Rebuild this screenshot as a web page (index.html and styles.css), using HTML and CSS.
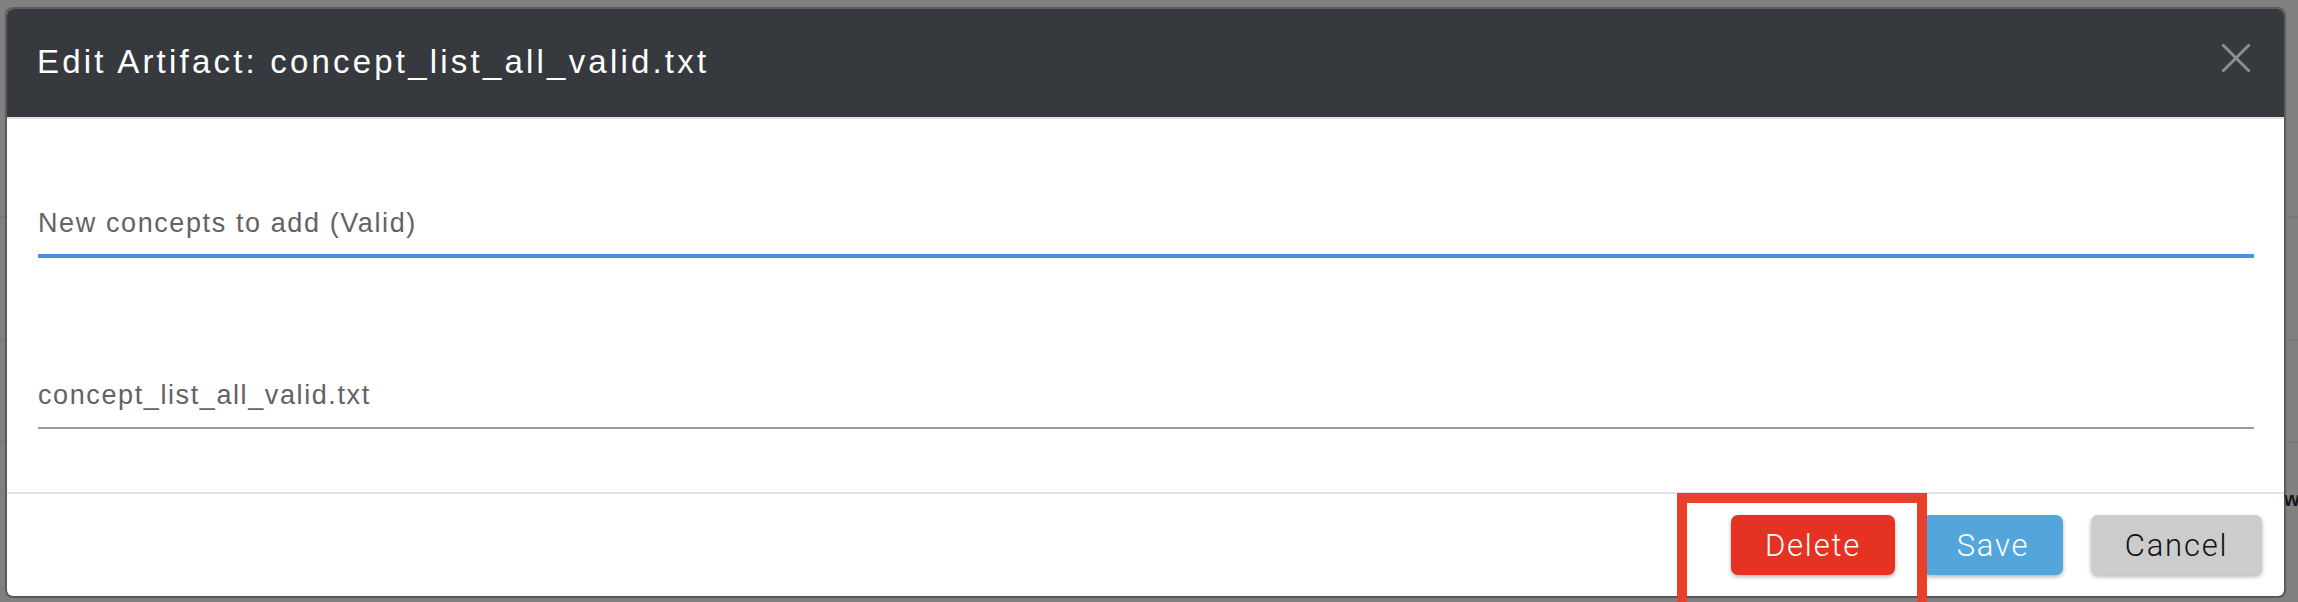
FILE: index.html
```html
<!DOCTYPE html>
<html lang="en">
<head>
<meta charset="utf-8">
<title>Edit Artifact</title>
<link rel="stylesheet" href="styles.css">
</head>
<body>
  <div class="page">
    <div class="row row-a"></div>
    <div class="row row-b"></div>
    <div class="row row-c"></div>
    <div class="row row-d"><span class="peek">w</span></div>
  </div>

  <div class="modal">
    <div class="modal-header">
      <h1 class="modal-title">Edit Artifact: concept_list_all_valid.txt</h1>
      <button class="close-btn" aria-label="Close">
        <svg width="30" height="30" viewBox="0 0 30 30">
          <path d="M1.5 1.5 L28.5 28.5 M28.5 1.5 L1.5 28.5" stroke="#8d8e90" stroke-width="3" fill="none"/>
        </svg>
      </button>
    </div>
    <div class="modal-body">
      <div class="field field-focused">
        <div class="field-input">New concepts to add (Valid)</div>
      </div>
      <div class="field field-file">
        <div class="field-input">concept_list_all_valid.txt</div>
      </div>
    </div>
    <div class="modal-footer">
      <button class="btn btn-delete">Delete</button>
      <button class="btn btn-save">Save</button>
      <button class="btn btn-cancel">Cancel</button>
    </div>
  </div>

  <div class="highlight-box"></div>
</body>
</html>
```

FILE: styles.css
```css
html, body {
  margin: 0;
  padding: 0;
  overflow: hidden;
}

body {
  background: #808080;
  width: 2298px;
  height: 602px;
  position: relative;
  font-family: "Liberation Sans", Arial, sans-serif;
}

/* backdrop page (under the dimming overlay) */
.page {
  display: flex;
  flex-direction: column;
}

.row {
  border-bottom: 2px solid #797979;
}

.row-a { height: 216px; }
.row-b { height: 121px; }
.row-c { height: 100px; }
.row-d {
  border-bottom: none;
  padding-top: 46px;
  padding-left: 2284px;
  white-space: nowrap;
}

.peek {
  font-size: 20px;
  font-weight: bold;
  color: #141414;
  line-height: 20px;
}

/* dialog */
.modal {
  position: absolute;
  left: 7px;
  top: 9px;
  width: 2277px;
  height: 587px;
  background: #ffffff;
  border-radius: 6px;
  box-shadow: 0 0 0 2px rgba(70, 70, 70, 0.55), 0 1px 3px rgba(0, 0, 0, 0.3);
  display: flex;
  flex-direction: column;
  overflow: hidden;
}

.modal-header {
  height: 108px;
  background: #363a3e;
  border-bottom: 2px solid #dfe3e8;
  display: flex;
  align-items: center;
  justify-content: space-between;
  padding: 0 33px 0 30px;
  flex-shrink: 0;
}

.modal-title {
  margin: 0 0 2px 0;
  color: #ffffff;
  font-size: 33px;
  font-weight: normal;
  letter-spacing: 3.2px;
  line-height: 40px;
}

.close-btn {
  background: none;
  border: none;
  padding: 0;
  width: 30px;
  height: 30px;
  margin-bottom: 10px;
  display: flex;
}

.modal-body {
  flex: 1;
  padding: 88px 30px 0 31px;
  display: flex;
  flex-direction: column;
}

.field-input {
  font-size: 27px;
  line-height: 32px;
  letter-spacing: 1.6px;
  color: #636363;
}

.field-focused .field-input {
  padding-bottom: 15px;
  border-bottom: 4px solid #4a90e2;
}

.field-file {
  margin-top: 121px;
}

.field-file .field-input {
  padding-bottom: 16px;
  border-bottom: 2px solid #999999;
}

.modal-footer {
  border-top: 2px solid #e1e4e8;
  padding: 21px 22px 21px 0;
  display: flex;
  justify-content: flex-end;
  gap: 28px;
  flex-shrink: 0;
}

.btn {
  height: 60px;
  padding: 0;
  border: none;
  border-radius: 7px;
  font-family: Roboto, "Liberation Sans", sans-serif;
  font-weight: 300;
  font-size: 31px;
  letter-spacing: 1.8px;
  box-shadow: 0 2px 4px rgba(0, 0, 0, 0.3);
  display: inline-flex;
  align-items: center;
  justify-content: center;
}

.btn-delete {
  width: 164px;
  background: #e53222;
  color: #ffffff;
}

.btn-save {
  width: 140px;
  background: #52a6dc;
  color: #ffffff;
}

.btn-cancel {
  width: 171px;
  background: #cccccc;
  color: #111111;
}

/* annotation overlay around the Delete button */
.highlight-box {
  position: absolute;
  left: 1677px;
  top: 493px;
  width: 230px;
  height: 110px;
  border: 10px solid #e8412b;
}
```
